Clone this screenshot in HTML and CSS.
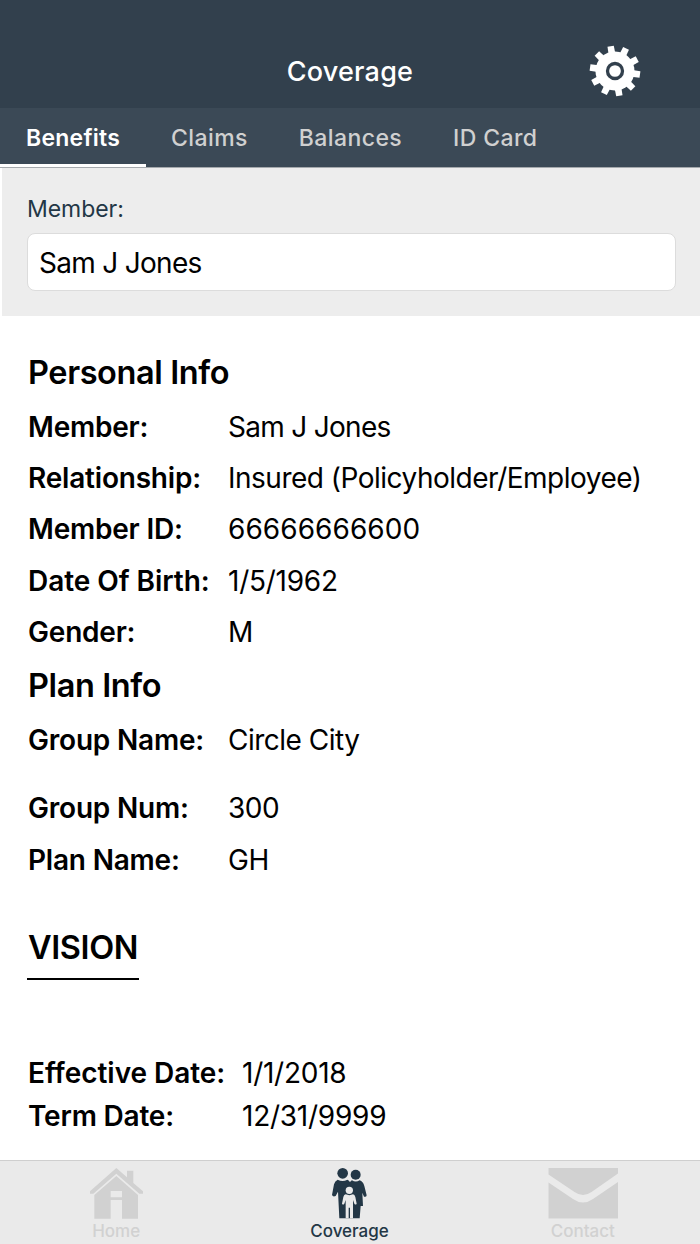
FILE: index.html
```html
<!DOCTYPE html>
<html lang="en">
<head>
<meta charset="utf-8">
<title>Coverage</title>
<link rel="stylesheet" href="styles.css">
</head>
<body>
<div class="app">
  <header class="topbar">
    <h1 class="title">Coverage</h1>
    <svg class="gear" viewBox="-26 -26 52 52">
      <defs><path id="tooth" d="M-3.400-17L-3.200-25.200H3.200L3.400-17Z"/></defs>
      <g fill="#fff" transform="rotate(-10)">
        <circle r="19.5"/>
        <use href="#tooth"/><use href="#tooth" transform="rotate(36)"/><use href="#tooth" transform="rotate(72)"/><use href="#tooth" transform="rotate(108)"/><use href="#tooth" transform="rotate(144)"/><use href="#tooth" transform="rotate(180)"/><use href="#tooth" transform="rotate(216)"/><use href="#tooth" transform="rotate(252)"/><use href="#tooth" transform="rotate(288)"/><use href="#tooth" transform="rotate(324)"/>
      </g>
      <circle r="7.5" fill="none" stroke="#32404d" stroke-width="3.3"/>
    </svg>
  </header>
  <nav class="tabs">
    <a class="tab active">Benefits</a>
    <a class="tab">Claims</a>
    <a class="tab">Balances</a>
    <a class="tab">ID Card</a>
  </nav>
  <section class="picker">
    <div class="picker-label">Member:</div>
    <div class="field">Sam J Jones</div>
  </section>
  <main class="content">
    <h2 class="heading">Personal Info</h2>
    <dl class="info">
      <dt>Member:</dt><dd class="name">Sam J Jones</dd>
      <dt>Relationship:</dt><dd>Insured (Policyholder/Employee)</dd>
      <dt>Member ID:</dt><dd class="digits">66666666600</dd>
      <dt class="wide">Date Of Birth:</dt><dd class="date">1/5/1962</dd>
      <dt>Gender:</dt><dd>M</dd>
    </dl>
    <h2 class="heading plan">Plan Info</h2>
    <dl class="info">
      <dt class="spaced">Group Name:</dt><dd>Circle City</dd>
      <dt>Group Num:</dt><dd>300</dd>
      <dt>Plan Name:</dt><dd>GH</dd>
    </dl>
    <h2 class="vision">VISION</h2>
    <dl class="info dates">
      <dt class="wide">Effective Date:</dt><dd class="date">1/1/2018</dd>
      <dt>Term Date:</dt><dd class="date">12/31/9999</dd>
    </dl>
  </main>
  <footer class="tabbar">
    <a class="item">
      <svg class="icon" width="53" height="51" viewBox="60 54 159 153"><path fill="currentColor" fill-rule="evenodd" d="M60 124L139 54L171 82V62H190V99L219 124V131H208L139 71L70 131H60ZM73 135L139 78L204 135V206H156V150H122V206H73ZM122 123V142H156V123Z"/></svg>
      <span>Home</span>
    </a>
    <a class="item current">
      <svg class="icon" width="35" height="51" viewBox="97 54 105 153"><g fill="currentColor"><circle cx="129" cy="70" r="16"/><circle cx="168" cy="74" r="15"/><path d="M114 89Q129 97 143 89Q149 91 151 97Q153 93 157 91Q168 98 180 91Q190 94 194 108L201 136Q200 142 193 140L188 128L190 168H183L180 205H119L115 125L108 138Q100 142 97 135L103 103Q106 92 114 89Z"/></g><g fill="#eaeaea"><circle cx="149" cy="121" r="11"/><path d="M138 133Q149 138 160 133Q165 134 167 141L171 161Q168 166 164 161L160 150V205H151V173H147V205H138V150L134 161Q130 166 127 161L131 141Q133 134 138 133Z"/></g></svg>
      <span>Coverage</span>
    </a>
    <a class="item">
      <svg class="icon" width="70" height="51" viewBox="0 0 70 51"><path fill="currentColor" d="M.5 0H70V5.500L43.500 24Q35 30 26.500 24L.5 6.500ZM.5 14.500L25 31Q35 38 45 31L70 14V50.500H.5Z"/></svg>
      <span>Contact</span>
    </a>
  </footer>
</div>
</body>
</html>
```
FILE: styles.css
```css
* { box-sizing: border-box; }
body { margin: 0; background: #fff; color: #000; font-family: Inter, "Liberation Sans", sans-serif; }
h1, h2, dl, dd { margin: 0; font-weight: inherit; }
.app { width: 700px; height: 1244px; display: flex; flex-direction: column; overflow: hidden; }
.topbar { height: 108px; flex: none; background: #32404d; display: grid; grid-template-columns: 1fr auto 1fr; align-items: center; padding-top: 34px; color: #fff; }
.title { grid-column: 2; font-size: 27px; font-weight: 550; line-height: 34px; padding-top: 2px; letter-spacing: .2px; }
.gear { width: 52px; height: 52px; justify-self: end; margin-right: 59px; }
.tabs { height: 60px; flex: none; background: #3b4956; border-bottom: 1px solid #a5a9ad; display: flex; color: #d0d0d0; font-size: 23px; font-weight: 500; line-height: 60px; letter-spacing: .4px; }
.tab { padding: 0 25.500px; white-space: nowrap; }
.tab.active { padding-left: 26px; color: #fff; border-bottom: 3px solid #fff; font-weight: 600; letter-spacing: .25px; }
.picker { height: 148px; flex: none; margin-left: 2px; background: #ededed; padding: 26px 24px 0 25px; }
.picker-label { color: #233746; font-size: 23px; line-height: 30px; letter-spacing: -.05px; }
.field { margin-top: 9px; height: 58px; border: 1px solid #dcdcdc; border-radius: 8px; background: #fff; padding-left: 11px; font-size: 28px; line-height: 58px; letter-spacing: -.7px; }
.content { flex: 1; padding: 35px 0 0 28px; }
.heading { font-size: 32.500px; font-weight: 600; line-height: 44px; letter-spacing: -.4px; margin-bottom: 7px; }
.info { display: grid; grid-template-columns: 200px 1fr; grid-auto-rows: minmax(51.200px, auto); font-size: 28px; line-height: 51px; white-space: nowrap; letter-spacing: -.5px; }
.info dt { font-weight: 600; letter-spacing: -.2px; }
.info .wide { letter-spacing: -.05px; }
.info .name { letter-spacing: -.7px; }
.info .digits { letter-spacing: .05px; }
.info .date { letter-spacing: -.25px; }
.info .spaced { height: 68px; }
.plan { margin-top: 6px; margin-bottom: 7.500px; }
.vision { display: inline-block; border-bottom: 2px solid #000; font-size: 32.500px; font-weight: 600; line-height: 60px; margin: 32px 0 0 -1px; padding: 0 1px; letter-spacing: -.4px; }
.dates { margin-top: 72px; grid-template-columns: 214px 1fr; grid-auto-rows: 43px; line-height: 43px; }
.tabbar { height: 84px; flex: none; background: #eaeaea; border-top: 1px solid #cfcfcf; display: grid; grid-template-columns: repeat(3, 1fr); padding-top: 7px; color: #d1d1d1; font-size: 17px; font-weight: 500; line-height: 22px; }
.item { display: flex; flex-direction: column; align-items: center; }
.item span { margin-right: 1px; }
.icon { display: block; margin-bottom: 1px; }
.current { color: #233746; }
```
